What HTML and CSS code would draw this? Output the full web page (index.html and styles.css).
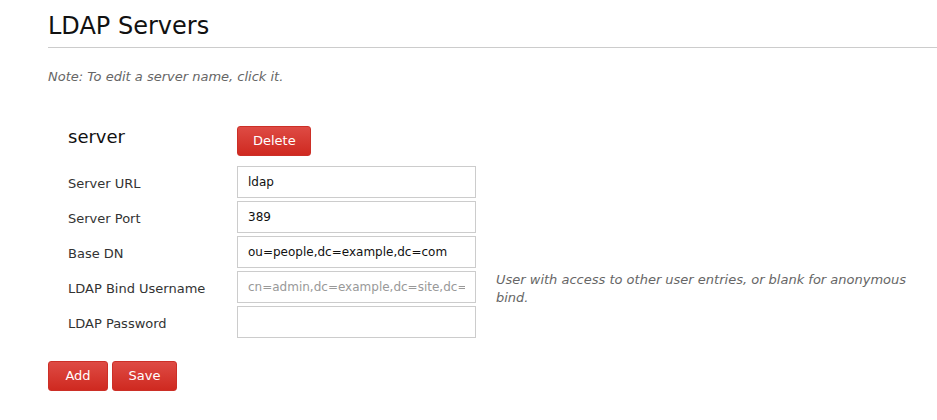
FILE: index.html
```html
<!DOCTYPE html>
<html>
<head>
<meta charset="utf-8">
<title>LDAP Servers</title>
<link rel="stylesheet" href="styles.css">
</head>
<body>
<div class="page">
  <h1 class="title">LDAP Servers</h1>
  <p class="note">Note: To edit a server name, click it.</p>
  <div class="server">
    <h2 class="server-name">server</h2>
    <div class="cell cell-delete"><button class="btn btn-delete">Delete</button></div>
    <div class="cell"></div>

    <label class="label">Server URL</label>
    <input class="field" type="text" value="ldap">
    <div class="cell"></div>

    <label class="label">Server Port</label>
    <input class="field" type="text" value="389">
    <div class="cell"></div>

    <label class="label">Base DN</label>
    <input class="field" type="text" value="ou=people,dc=example,dc=com">
    <div class="cell"></div>

    <label class="label">LDAP Bind Username</label>
    <input class="field" type="text" placeholder="cn=admin,dc=example,dc=site,dc=com">
    <div class="help">User with access to other user entries, or blank for anonymous bind.</div>

    <label class="label">LDAP Password</label>
    <input class="field" type="password">
    <div class="cell"></div>
  </div>
  <div class="actions">
    <button class="btn btn-add">Add</button>
    <button class="btn btn-save">Save</button>
  </div>
</div>
</body>
</html>
```

FILE: styles.css
```css
html, body {
  margin: 0;
  padding: 0;
  background: #fff;
}
body {
  font-family: "DejaVu Sans", "Liberation Sans", sans-serif;
  font-size: 13px;
  color: #333;
}
.page {
  padding-left: 48px;
}
.title {
  margin: 12px 0 0 0;
  padding-bottom: 7px;
  font-size: 24px;
  line-height: 28px;
  font-weight: normal;
  color: #111;
  border-bottom: 1px solid #ccc;
}
.note {
  margin: 20px 0 0 0;
  font-style: italic;
  line-height: 18px;
  color: #666;
}
.server {
  margin: 40px 8px 0 20px;
  display: grid;
  grid-template-columns: 149px 239px 1fr;
  column-gap: 20px;
  row-gap: 3px;
  align-items: center;
}
.server-name {
  grid-column: 1;
  margin: 0;
  align-self: start;
  font-size: 18px;
  line-height: 21px;
  font-weight: normal;
  color: #111;
}
.cell-delete {
  margin-bottom: 7px;
}
.label {
  padding-top: 3px;
  color: #333;
  line-height: 15px;
}
.field {
  box-sizing: border-box;
  width: 239px;
  height: 32px;
  margin: 0;
  padding: 0 10px;
  border: 1px solid #ccc;
  border-radius: 0;
  font-family: "DejaVu Sans", sans-serif;
  font-size: 12px;
  color: #111;
  background: #fff;
  outline: none;
}
.field::placeholder {
  color: #999;
}
.help {
  margin: 0 0 -4px 0;
  font-style: italic;
  color: #666;
  line-height: 18px;
}
.btn {
  box-sizing: border-box;
  height: 30px;
  min-width: 60px;
  margin: 0;
  padding: 0 15px 1px;
  border: 1px solid #cc2f27;
  border-radius: 3px;
  background: linear-gradient(to bottom, #de4b44, #cf2920);
  color: #fff;
  font-family: "DejaVu Sans", sans-serif;
  font-size: 13px;
  cursor: pointer;
}
.btn-delete {
  width: 74px;
  display: block;
}
.btn-save {
  width: 65px;
}
.actions {
  margin-top: 23px;
  display: flex;
  gap: 4px;
}
```
